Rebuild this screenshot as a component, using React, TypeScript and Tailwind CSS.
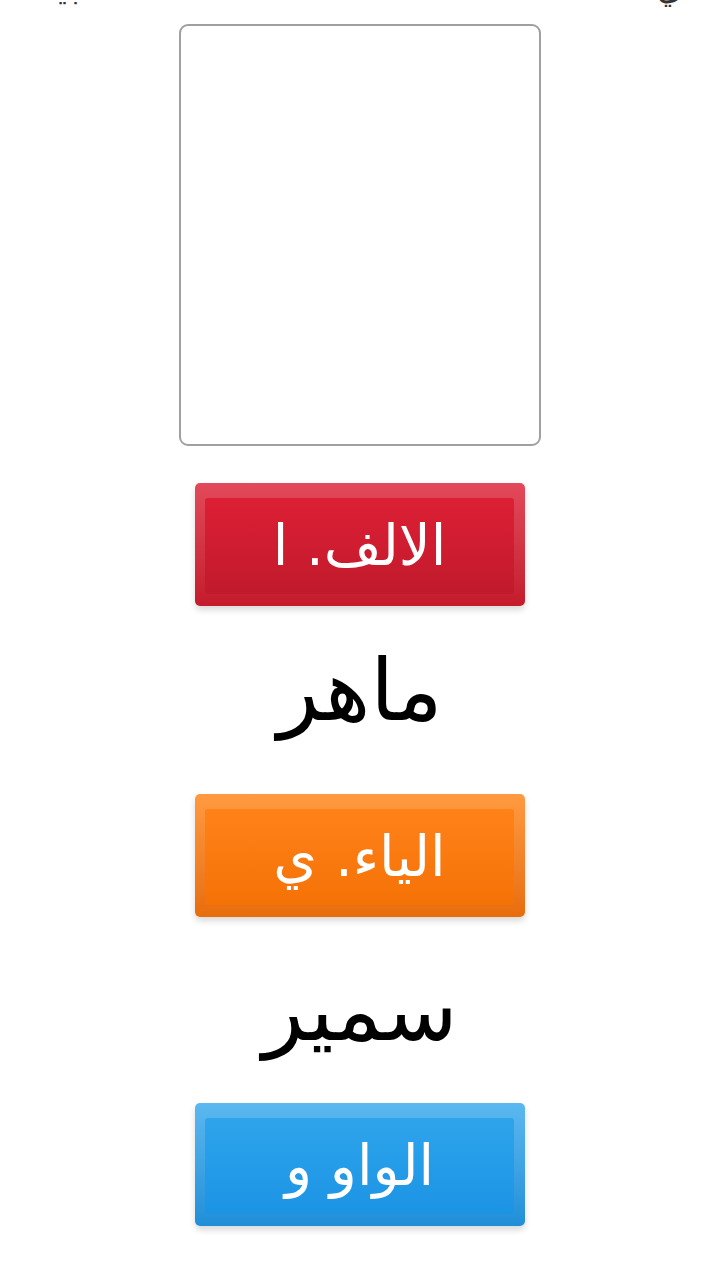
import React from "react";

function Btn({ label, outer, face, shadow }: { label: string; outer: string; face: string; shadow: string }) {
  return (
    <div className={`w-[330px] h-[123px] rounded-[5px] pt-[15px] pl-[10px] pr-[11px] pb-[12px] ${outer} ${shadow}`}>
      <div className={`w-full h-full rounded-[3px] flex items-center justify-center ${face}`}>
        <span dir="rtl" className="text-white text-[56px] leading-none" style={{ fontFamily: '"DejaVu Sans", sans-serif' }}>
          {label}
        </span>
      </div>
    </div>
  );
}

export default function App() {
  return (
    <div className="w-[720px] h-[1262px] bg-white overflow-hidden flex flex-col items-center" style={{ fontFamily: '"DejaVu Sans", sans-serif' }}>
      <div className="w-full h-[24px] relative overflow-hidden">
        <div className="absolute left-[22px] top-[-28px] text-[#333] text-[32px] leading-none font-bold">ـبيت</div>
        <div className="absolute right-[38px] top-[-28px] text-[#333] text-[32px] leading-none" dir="rtl">ي</div>
      </div>
      <div className="w-[362px] h-[422px] border-2 border-[#a0a0a0] rounded-[9px] bg-white" />
      <div className="h-[37px]" />
      <Btn
        label="الالف. ا"
        outer="bg-gradient-to-b from-[#e2495a] to-[#c41a2c]"
        face="bg-gradient-to-b from-[#dd1f35] to-[#c11a2c]"
        shadow="shadow-[0_4px_6px_rgba(0,0,0,0.15)]"
      />
      <div className="h-[188px] pb-[20px] flex items-center justify-center">
        <span dir="rtl" className="text-black text-[86px] leading-none">ماهر</span>
      </div>
      <Btn
        label="الياء. ي"
        outer="bg-gradient-to-b from-[#ff9a40] to-[#e86d0a]"
        face="bg-gradient-to-b from-[#ff8218] to-[#f57205]"
        shadow="shadow-[0_4px_6px_rgba(0,0,0,0.15)]"
      />
      <div className="h-[186px] flex items-center justify-center">
        <span dir="rtl" className="text-black text-[86px] leading-none">سمير</span>
      </div>
      <Btn
        label="الواو و"
        outer="bg-gradient-to-b from-[#5bb8f0] to-[#1f8fd8]"
        face="bg-gradient-to-b from-[#2ea4ec] to-[#1b94e4]"
        shadow="shadow-[0_4px_6px_rgba(0,0,0,0.15)]"
      />
    </div>
  );
}
